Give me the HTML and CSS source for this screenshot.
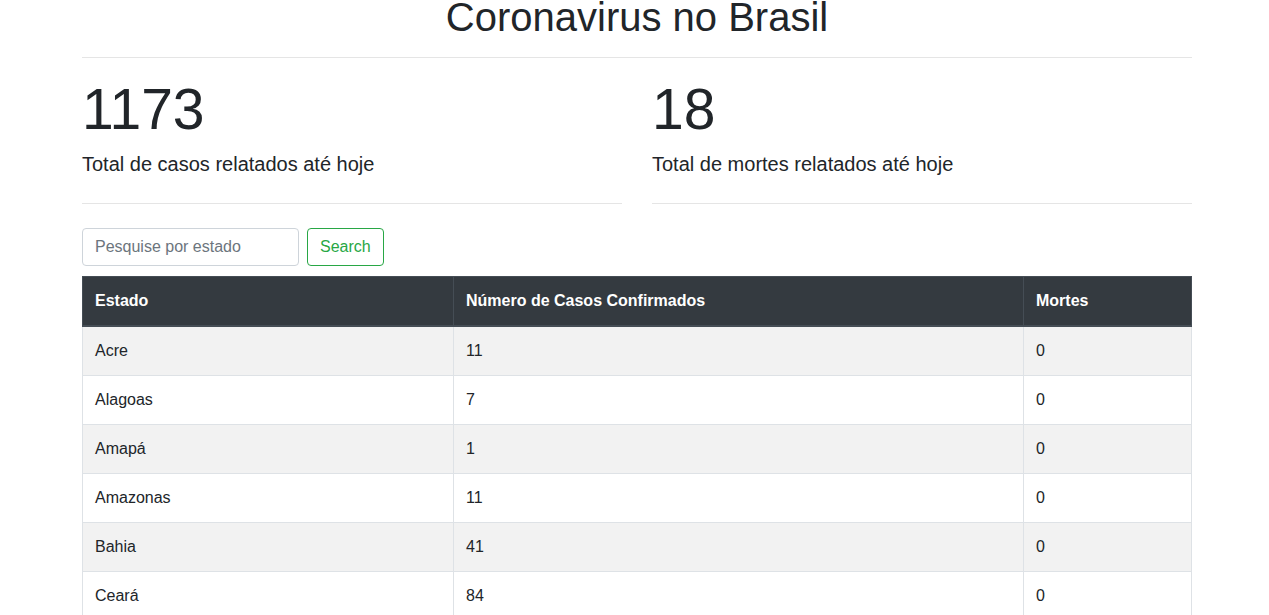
FILE: index.html
```html
<!DOCTYPE html>
<html lang="pt-BR">
<head>
<meta charset="utf-8">
<title>Coronavirus no Brasil</title>
<link rel="stylesheet" href="styles.css">
</head>
<body>
<div class="container">
  <h1 class="title">Coronavirus no Brasil</h1>
  <hr class="rule">
  <div class="stats">
    <div class="stat">
      <h2 class="stat-number">1173</h2>
      <p class="stat-label">Total de casos relatados até hoje</p>
      <hr class="rule">
    </div>
    <div class="stat">
      <h2 class="stat-number">18</h2>
      <p class="stat-label">Total de mortes relatados até hoje</p>
      <hr class="rule">
    </div>
  </div>
  <form class="search">
    <input class="search-input" type="search" placeholder="Pesquise por estado">
    <button class="search-btn" type="button">Search</button>
  </form>
  <table class="data">
    <thead>
      <tr><th class="c1">Estado</th><th class="c2">Número de Casos Confirmados</th><th class="c3">Mortes</th></tr>
    </thead>
    <tbody>
      <tr><td>Acre</td><td>11</td><td>0</td></tr>
      <tr><td>Alagoas</td><td>7</td><td>0</td></tr>
      <tr><td>Amapá</td><td>1</td><td>0</td></tr>
      <tr><td>Amazonas</td><td>11</td><td>0</td></tr>
      <tr><td>Bahia</td><td>41</td><td>0</td></tr>
      <tr><td>Ceará</td><td>84</td><td>0</td></tr>
      <tr><td>Distrito Federal</td><td>160</td><td>0</td></tr>
    </tbody>
  </table>
</div>
</body>
</html>
```
FILE: styles.css
```css
* { box-sizing: border-box; }
html, body { margin: 0; }
body {
  font-family: "Liberation Sans", Arial, sans-serif;
  font-size: 16px;
  line-height: 1.5;
  color: #212529;
  background: #fff;
  padding-left: 5px;
}
.container {
  width: 1110px;
  margin: 0 auto;
}
.title {
  margin: 0;
  font-size: 40px;
  font-weight: 500;
  line-height: 34px;
  text-align: center;
}
.rule {
  margin: 23px 0 16px;
  border: 0;
  border-top: 1px solid rgba(0,0,0,.1);
  height: 0;
}
.stats {
  display: flex;
  gap: 30px;
}
.stat {
  flex: 1;
}
.stat .rule { margin-top: 24px; margin-bottom: 24px; }
.stat-number {
  margin: 0 0 6px;
  padding-top: 2px;
  font-size: 57px;
  font-weight: 300;
  line-height: 67px;
}
.stat-label {
  margin: 0 0 24px;
  font-size: 20px;
  font-weight: 300;
  line-height: 1.5;
}
.search {
  display: flex;
  align-items: center;
  gap: 8px;
  margin: 0 0 10px;
}
.search-input {
  width: 217px;
  height: 38px;
  padding: 6px 12px;
  font: inherit;
  font-size: 16px;
  color: #495057;
  border: 1px solid #ced4da;
  border-radius: 4px;
  background: #fff;
}
.search-input::placeholder { color: #6c757d; }
.search-btn {
  height: 38px;
  padding: 6px 12px;
  font: inherit;
  font-size: 16px;
  color: #28a745;
  background: transparent;
  border: 1px solid #28a745;
  border-radius: 4px;
}
.data {
  width: 100%;
  border-collapse: collapse;
  table-layout: fixed;
}
.data th, .data td {
  padding: 12px;
  text-align: left;
  vertical-align: top;
  border: 1px solid #dee2e6;
  line-height: 24px;
}
.data th {
  color: #fff;
  background: #343a40;
  border-color: #454d55;
  border-bottom-width: 2px;
  font-weight: 700;
}
.c1 { width: 371px; }
.c2 { width: 570px; }
.data tbody tr:nth-child(odd) { background: rgba(0,0,0,.05); }
```
